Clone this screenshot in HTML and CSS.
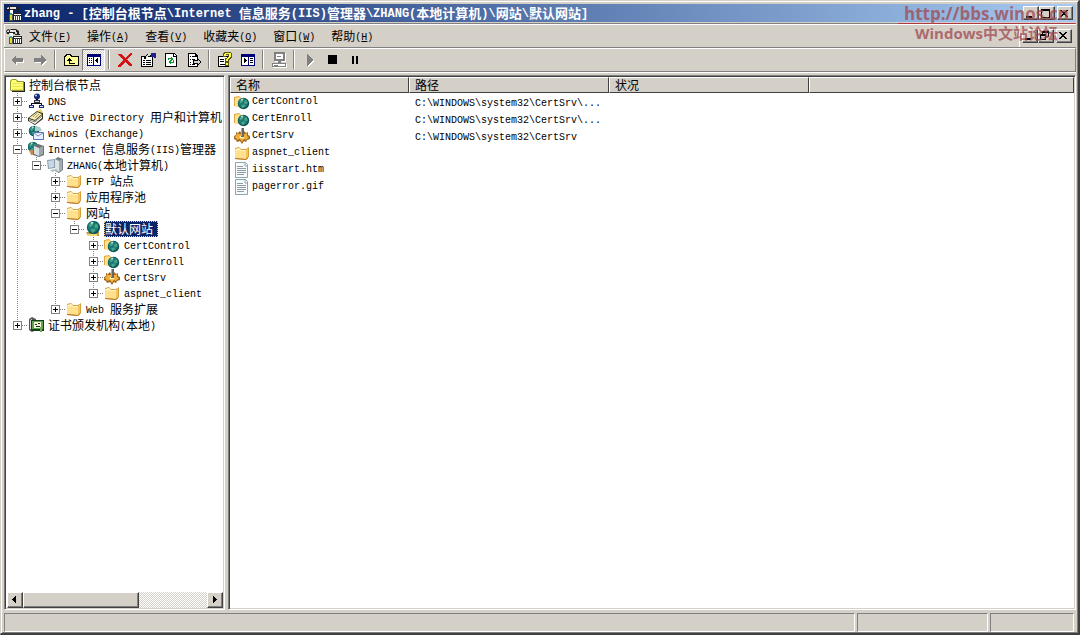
FILE: index.html
```html
<!DOCTYPE html>
<html lang="zh-CN">
<head>
<meta charset="utf-8">
<title>zhang - 控制台根节点</title>
<link rel="stylesheet" href="styles.css">
</head>
<body>
<svg class="defs" aria-hidden="true">
  <symbol id="mmc" viewBox="0 0 16 16">
    <path d="M0 3l2-2 2 1 1-1h5l3 2v3h-2V4H9v2H7V5H3v1H1z" fill="#222"/><path d="M1 3l2-1v2H1zM4 2h6v2H4z" fill="#e4e4e4"/>
    <path d="M4 5h3v4H4z" fill="#fff"/><path d="M3 9h4v7H3z" fill="#555"/><path d="M4 9h2v6H4z" fill="#e8e020"/><path d="M4 8h2v2H4z" fill="#30a8a0"/>
    <path d="M7 8h9v8H7z" fill="#222"/><path d="M8 9h7v1H8zM8 11h1v4H8zM10 11h1v4h-1zM12 11h1v4h-1zM14 11h1v4h-1z" fill="#fff"/><path d="M9 10h1v5H9zM11 10h1v5h-1zM13 10h1v5h-1z" fill="#902050"/><path d="M9 6h5v1H9z" fill="#222"/>
  </symbol>
  <symbol id="folder" viewBox="0 0 16 16">
    <path d="M1 3l4-1 2 2h5l3-2v10l-3 3-11-1z" fill="#d99f3c"/><path d="M1 4l4-1 2 2h5v9L1 13z" fill="#ffe08e"/><path d="M12 5l2-2v9l-2 2z" fill="#f3c35c"/><path d="M2 4l3-1 1 1 1 1h5v1H7L5 5 2 6z" fill="#fff4c4"/><path d="M1 13l11 1 2-2v1l-2 2-11-1z" fill="#b97a26"/>
  </symbol>
  <symbol id="rootfolder" viewBox="0 0 16 16">
    <path d="M0 4l2-2h4l2 2h6v10H1L0 13z" fill="#99992a"/><path d="M1 5l1-2h4l1 2h6v8H1z" fill="#ffff70"/><path d="M2 6h11v1H2zM2 9h11v1H2zM2 12h11v1H2z" fill="#e6e860"/><path d="M14 5h1v10H2v-1h12z" fill="#222"/>
  </symbol>
  <symbol id="globe" viewBox="0 0 16 16">
    <circle cx="8" cy="8" r="7" fill="#075055"/><circle cx="7.500" cy="7.500" r="6" fill="#157a74"/><path d="M3 5l3-3 2 1-1 3-3 2zM9 5l3-1 1 4-3 1-1-2zM5 10l4-1 1 2-3 3z" fill="#4fa089"/><path d="M5 2h3L6 5z" fill="#cceee0"/>
  </symbol>
  <symbol id="site" viewBox="0 0 16 16">
    <path d="M1 11h13v4H3z" fill="#c79b46"/><path d="M2 13h10v2H3z" fill="#f4d878"/><use href="#globe" x="1" y="-1" width="15" height="15"/>
  </symbol>
  <symbol id="webdir" viewBox="0 0 16 16">
    <path d="M0 3l5-1 2 2h5v10L0 12z" fill="#e2a943"/><path d="M1 4l4-1 2 2v8l-6-1z" fill="#ffe18c"/><use href="#globe" x="3" y="3" width="13" height="13"/>
  </symbol>
  <symbol id="gear" viewBox="0 0 16 16">
    <path d="M2 4l2 1 2-2 1 2h2l1-2 2 2 2-1v3l2 1v3l-3 1-1 2-2-1-2 3-2-3-3 1-1-2-2-1V8l2-1z" fill="#9c641c"/><path d="M3 5l2 1h6l2-1v3l2 1-3 3-2-1-2 3-2-3-3 1-1-2-2-1 2-1z" fill="#f0ae3a"/><ellipse cx="8" cy="9" rx="2.500" ry="1.500" fill="#fff1ae"/><path d="M7 0h3v9H7z" fill="#666"/><path d="M7 0h1v8H7z" fill="#aaa"/>
  </symbol>
  <symbol id="file" viewBox="0 0 16 16">
    <path d="M1.500 .500h10l2 2v13h-12z" fill="#f8fbfb" stroke="#8da3ad"/><path d="M11 1v3h3" fill="none" stroke="#8da3ad"/><path d="M3 4.500h6M3 6.500h9M3 8.500h9M3 10.500h9M3 12.500h7" stroke="#8c9ba5"/>
  </symbol>
  <symbol id="dns" viewBox="0 0 16 16">
    <circle cx="9" cy="3.500" r="3" fill="#172878"/><circle cx="8" cy="2.500" r="1" fill="#bfe0ff"/><path d="M8 6h2v4H8zM3 10h11v1H3zM3 10h1v3H3zM13 10h1v3h-1z" fill="#111"/><path d="M6 7h6v3H6z" fill="#333"/><path d="M7 8h4v1H7z" fill="#ccd8ff"/><path d="M1 12h5v3H1zM11 12h5v3h-5z" fill="#182a80"/><path d="M2 13h3v1H2zM12 13h3v1h-3z" fill="#dde8ff"/>
  </symbol>
  <symbol id="adir" viewBox="0 0 16 16">
    <path d="M0 9l9-7 6 2v6l-8 6-7-4z" fill="#332e18"/><path d="M1 9l8-6 5 2-7 6z" fill="#f4ecb4"/><path d="M7 12l7-6v3l-7 6-6-3v-2z" fill="#fff"/><path d="M1 11l6 2 7-6" fill="none" stroke="#89856a"/><path d="M5 8l4-4M7 9l4-4" stroke="#ac9d59"/><path d="M9 2l4-2 2 4z" fill="#e8d05a"/>
  </symbol>
  <symbol id="exch" viewBox="0 0 16 16">
    <use href="#globe" x="0" y="0" width="12" height="12"/><path d="M7 1l5 1 2 4H7z" fill="#a9ccc8"/><path d="M5.500 7.500h10v7h-10z" fill="#e9eeff" stroke="#5a6fae"/><path d="M6 8l4 3 5-3" fill="none" stroke="#7e90c4"/>
  </symbol>
  <symbol id="iis" viewBox="0 0 16 16">
    <use href="#globe" x="-1" y="0" width="12" height="12"/><path d="M1 9h5v5H3z" fill="#c58c4b"/><path d="M5 5l5-2 6 2v9l-5 2-6-2z" fill="#687175"/><path d="M6 5l5 2v8l-5-2z" fill="#d8dfe0"/><path d="M11 7l4-2v8l-4 2z" fill="#9ba7aa"/>
  </symbol>
  <symbol id="server" viewBox="0 0 16 16">
    <path d="M8 2l3-2 5 2v11l-4 3-4-2z" fill="#768087"/><path d="M8 2l4 2v11l-4-2z" fill="#dce4e6"/><path d="M12 4l3-2v11l-3 2z" fill="#a2acb1"/><path d="M0 3l8-1v9l-7 1z" fill="#8e9ca5"/><path d="M1 4l6-1v7l-5 1z" fill="#c6d8e7"/><path d="M3 13l6-1 2 1-6 2z" fill="#b1bdc2"/>
  </symbol>
  <symbol id="ca" viewBox="0 0 16 16">
    <path d="M1 2l3-2 4 2v11l-4 2-3-2z" fill="#555"/><path d="M2 3l2-1v11l-2-1z" fill="#ddd"/><path d="M3 3h13v11H3z" fill="#153f18"/><path d="M4 4h11v8H4z" fill="#63a054"/><path d="M6 5h7v6H6z" fill="#eef6d8"/><path d="M7 7h2v1H7zM10 6h2v1h-2zM8 9h4v1H8z" fill="#222"/><path d="M12 10h2v5h-2z" fill="#6cad47"/>
  </symbol>
</svg>

<main class="window">
  <header class="titlebar">
    <svg class="ico"><use href="#mmc"/></svg>
    <h1><span class="en">zhang - [</span>控制台根节点<span class="en">\Internet </span>信息服务<span class="en">(IIS)</span>管理器<span class="en">\ZHANG(</span>本地计算机<span class="en">)\</span>网站<span class="en">\</span>默认网站<span class="en">]</span></h1>
    <div class="winbtns">
      <button type="button" aria-label="最小化"><svg viewBox="0 0 12 11"><path d="M2 8h6v2H2z"/></svg></button>
      <button type="button" aria-label="最大化"><svg viewBox="0 0 12 11"><path d="M1 1h9v9H1zM2 3v6h7V3z" fill-rule="evenodd"/></svg></button>
      <button type="button" class="close" aria-label="关闭"><svg viewBox="0 0 12 11"><path d="M2 2h2v1h1v1h2V3h1V2h2v1H9v1H8v1H7v1h1v1h1v1h1v1H8V8H7V7H5v1H4v1H2V8h1V7h1V6h1V5H4V4H3V3H2z"/></svg></button>
    </div>
  </header>

  <nav class="menubar" aria-label="菜单">
    <svg class="ico"><use href="#mmc"/></svg>
    <div class="menus">
      <button type="button">文件<span class="en">(<u>F</u>)</span></button>
      <button type="button">操作<span class="en">(<u>A</u>)</span></button>
      <button type="button">查看<span class="en">(<u>V</u>)</span></button>
      <button type="button">收藏夹<span class="en">(<u>O</u>)</span></button>
      <button type="button">窗口<span class="en">(<u>W</u>)</span></button>
      <button type="button">帮助<span class="en">(<u>H</u>)</span></button>
    </div>
    <div class="winbtns child">
      <button type="button" aria-label="最小化子窗口"><svg viewBox="0 0 12 11"><path d="M2 8h6v2H2z"/></svg></button>
      <button type="button" aria-label="还原子窗口"><svg viewBox="0 0 12 11"><path d="M3 1h7v6H7V6h2V3H4v1H3zM1 4h6v6H1zM2 6v3h4V6z" fill-rule="evenodd"/></svg></button>
      <button type="button" class="close" aria-label="关闭子窗口"><svg viewBox="0 0 12 11"><path d="M2 2h2v1h1v1h2V3h1V2h2v1H9v1H8v1H7v1h1v1h1v1h1v1H8V8H7V7H5v1H4v1H2V8h1V7h1V6h1V5H4V4H3V3H2z"/></svg></button>
    </div>
  </nav>

  <div class="toolbar" role="toolbar" aria-label="工具栏">
    <button type="button" aria-label="后退"><svg viewBox="0 0 16 16"><path d="M3 9l5 5v-3h7V8H8z" fill="#fff"/><path d="M2 8l5-5v3h7v4H7v3z" fill="#808080"/></svg></button>
    <button type="button" aria-label="前进"><svg viewBox="0 0 16 16"><path d="M15 9l-5 5v-3H3V8h7z" fill="#fff"/><path d="M14 8L9 3v3H2v4h7v3z" fill="#808080"/></svg></button>
    <i class="sep"></i>
    <button type="button" aria-label="向上"><svg viewBox="0 0 16 16"><path d="M1 4h1V3h1V2h5v1h1v1h7v10H1z"/><path d="M2 5h1V4h1V3h3v1h1v1h7v8H2z" fill="#ffff91"/><path d="M6 6h1v1h1v1h1v1H7v2h5v1H6V9H4V8h1V7h1z"/></svg></button>
    <button type="button" class="pressed" aria-label="显示/隐藏控制台树" aria-pressed="true"><svg viewBox="0 0 16 16"><path d="M1 2h14v12H1z" fill="#000078"/><path d="M2 5h5v8H2zM8 5h6v8H8z" fill="#fff"/><path d="M3 6h1v1H3zM5 6h1v1H5zM3 8h1v1H3zM5 8h1v1H5zM3 10h1v1H3zM5 10h1v1H5zM11 6h1v5h-1zM10 7h1v3h-1zM9 8h1v1H9z"/></svg></button>
    <i class="sep"></i>
    <button type="button" aria-label="删除"><svg viewBox="0 0 16 16"><path d="M1 2h3l4 4 5-5h2v1l-5 6 5 5v1h-3L8 10l-4 5H1v-2l5-5-5-5z" fill="#d41414"/></svg></button>
    <button type="button" aria-label="属性"><svg viewBox="0 0 16 16"><path d="M1 4h12v11H1z"/><path d="M2 5h10v9H2z" fill="#fff"/><path d="M3 8h2v1H3zM6 8h5v1H6zM3 10h2v1H3zM6 10h5v1H6zM3 12h2v1H3zM6 12h5v1H6zM3 6l5-4 3 1 1 2-4-1-3 3z"/><path d="M6 4l3-2 2 1-3 1-2 2z" fill="#ddd"/><path d="M11 1h5v5h-2V5h-3z" fill="#202090"/></svg></button>
    <button type="button" aria-label="刷新"><svg viewBox="0 0 16 16"><path d="M2 1h9l3 3v11H2z"/><path d="M3 2h7v3h3v9H3z" fill="#fff"/><path d="M11 2v2h2z" fill="#fff"/><path d="M5 8V6h3V5l2 2-2 2V7H6v1zM11 8v3H8v1l-3-2 3-2v2h2V8z" fill="#129430"/></svg></button>
    <button type="button" aria-label="导出列表"><svg viewBox="0 0 16 16"><path d="M2 1h8l2 3v11H2z"/><path d="M3 2h6v3h2v9H3z" fill="#fff"/><path d="M4 4h1v1H4zM6 4h3v1H6zM4 7h1v1H4zM6 7h3v1H6zM4 10h1v1H4zM4 12h1v1H4zM6 12h3v1H6zM7 8h4V6l5 4-5 4v-2H7z"/><path d="M8 9h4V8l2 2-2 2v-1H8z" fill="#d0d0d0"/></svg></button>
    <i class="sep"></i>
    <button type="button" aria-label="帮助"><svg viewBox="0 0 16 16"><path d="M1 4h11v11H1z"/><path d="M2 5h9v9H2z" fill="#fff"/><path d="M3 7h4v1H3zM3 9h4v1H3zM3 12h5v1H3z"/><path d="M6 4V1l2-1h5l2 1v5l-3 2v2H8V6l3-1V3H9v2H6zM8 10h4v4H8z" fill="#5b5718"/><path d="M7 4V2l2-1h4l1 1v3l-3 2v2H9V7l3-2V2H9v2zM9 11h2v2H9z" fill="#ffff42"/></svg></button>
    <button type="button" aria-label="操作窗格"><svg viewBox="0 0 16 16"><path d="M1 2h14v12H1z" fill="#000078"/><path d="M2 5h6v8H2zM9 5h5v8H9z" fill="#fff"/><path d="M10 6h3v1h-3zM10 8h3v1h-3zM10 10h3v1h-3zM4 6h1v5H4zM5 7h1v3H5zM6 8h1v1H6z"/></svg></button>
    <i class="sep"></i>
    <button type="button" aria-label="连接" disabled><svg viewBox="0 0 16 16"><path d="M4 1h11v9H4zM2 12h14v4H2z" fill="#fff"/><path d="M3 0h11v9H3zM5 2v5h7V2zM7 9h3v2H7zM1 11h14v4H1zM2 12v2h12v-2z" fill="#808080" fill-rule="evenodd"/><path d="M6 4h4v1H6zM3 13h4v1H3z" fill="#808080"/></svg></button>
    <i class="sep"></i>
    <button type="button" aria-label="启动" disabled><svg viewBox="0 0 16 16"><path d="M6 3l6 6-6 6z" fill="#fff"/><path d="M5 2l6 6-6 6z" fill="#808080"/></svg></button>
    <button type="button" aria-label="停止"><svg viewBox="0 0 16 16"><path d="M3 3h9v9H3z"/></svg></button>
    <button type="button" aria-label="暂停"><svg viewBox="0 0 16 16"><path d="M4 4h2v8H4zM8 4h2v8H8z"/></svg></button>
  </div>

  <div class="panes">
    <section class="treepane" aria-label="控制台树">
      <div class="tree">
        <div class="root"><svg class="ico"><use href="#rootfolder"/></svg><span class="label">控制台根节点</span></div>
        <ul>
          <li><div class="node"><button type="button" class="exp" aria-label="展开"></button><svg class="ico"><use href="#dns"/></svg><span class="label"><span class="en">DNS</span></span></div></li>
          <li><div class="node"><button type="button" class="exp" aria-label="展开"></button><svg class="ico"><use href="#adir"/></svg><span class="label"><span class="en">Active Directory </span>用户和计算机</span></div></li>
          <li><div class="node"><button type="button" class="exp" aria-label="展开"></button><svg class="ico"><use href="#exch"/></svg><span class="label"><span class="en">winos (Exchange)</span></span></div></li>
          <li><div class="node"><button type="button" class="exp open" aria-label="折叠"></button><svg class="ico"><use href="#iis"/></svg><span class="label"><span class="en">Internet </span>信息服务<span class="en">(IIS)</span>管理器</span></div>
            <ul>
              <li><div class="node"><button type="button" class="exp open" aria-label="折叠"></button><svg class="ico"><use href="#server"/></svg><span class="label"><span class="en">ZHANG(</span>本地计算机<span class="en">)</span></span></div>
                <ul>
                  <li><div class="node"><button type="button" class="exp" aria-label="展开"></button><svg class="ico"><use href="#folder"/></svg><span class="label"><span class="en">FTP </span>站点</span></div></li>
                  <li><div class="node"><button type="button" class="exp" aria-label="展开"></button><svg class="ico"><use href="#folder"/></svg><span class="label">应用程序池</span></div></li>
                  <li><div class="node"><button type="button" class="exp open" aria-label="折叠"></button><svg class="ico"><use href="#folder"/></svg><span class="label">网站</span></div>
                    <ul>
                      <li><div class="node"><button type="button" class="exp open" aria-label="折叠"></button><svg class="ico"><use href="#site"/></svg><span class="label selected">默认网站</span></div>
                        <ul>
                          <li><div class="node"><button type="button" class="exp" aria-label="展开"></button><svg class="ico"><use href="#webdir"/></svg><span class="label"><span class="en">CertControl</span></span></div></li>
                          <li><div class="node"><button type="button" class="exp" aria-label="展开"></button><svg class="ico"><use href="#webdir"/></svg><span class="label"><span class="en">CertEnroll</span></span></div></li>
                          <li><div class="node"><button type="button" class="exp" aria-label="展开"></button><svg class="ico"><use href="#gear"/></svg><span class="label"><span class="en">CertSrv</span></span></div></li>
                          <li><div class="node"><button type="button" class="exp" aria-label="展开"></button><svg class="ico"><use href="#folder"/></svg><span class="label"><span class="en">aspnet_client</span></span></div></li>
                        </ul>
                      </li>
                    </ul>
                  </li>
                  <li><div class="node"><button type="button" class="exp" aria-label="展开"></button><svg class="ico"><use href="#folder"/></svg><span class="label"><span class="en">Web </span>服务扩展</span></div></li>
                </ul>
              </li>
            </ul>
          </li>
          <li><div class="node"><button type="button" class="exp" aria-label="展开"></button><svg class="ico"><use href="#ca"/></svg><span class="label">证书颁发机构<span class="en">(</span>本地<span class="en">)</span></span></div></li>
        </ul>
      </div>
      <div class="scrollbar">
        <button type="button" aria-label="向左滚动"><svg viewBox="0 0 12 12"><path d="M7 2v7H6V8H5V7H4V6H3V5h1V4h1V3h1V2z"/></svg></button>
        <div class="track"><div class="thumb"></div></div>
        <button type="button" aria-label="向右滚动"><svg viewBox="0 0 12 12"><path d="M4 2v7h1V8h1V7h1V6h1V5H7V4H6V3H5V2z"/></svg></button>
      </div>
    </section>

    <section class="listpane" aria-label="内容">
      <table>
        <colgroup><col class="c-name"><col class="c-path"><col class="c-path"><col></colgroup>
        <thead><tr><th>名称</th><th>路径</th><th>状况</th><td class="filler"></td></tr></thead>
        <tbody>
          <tr><td><div class="item"><svg class="ico"><use href="#webdir"/></svg><span class="en">CertControl</span></div></td><td><span class="en">C:\WINDOWS\system32\CertSrv\...</span></td><td></td><td></td></tr>
          <tr><td><div class="item"><svg class="ico"><use href="#webdir"/></svg><span class="en">CertEnroll</span></div></td><td><span class="en">C:\WINDOWS\system32\CertSrv\...</span></td><td></td><td></td></tr>
          <tr><td><div class="item"><svg class="ico"><use href="#gear"/></svg><span class="en">CertSrv</span></div></td><td><span class="en">C:\WINDOWS\system32\CertSrv</span></td><td></td><td></td></tr>
          <tr><td><div class="item"><svg class="ico"><use href="#folder"/></svg><span class="en">aspnet_client</span></div></td><td></td><td></td><td></td></tr>
          <tr><td><div class="item"><svg class="ico"><use href="#file"/></svg><span class="en">iisstart.htm</span></div></td><td></td><td></td><td></td></tr>
          <tr><td><div class="item"><svg class="ico"><use href="#file"/></svg><span class="en">pagerror.gif</span></div></td><td></td><td></td><td></td></tr>
        </tbody>
      </table>
    </section>
  </div>

  <footer class="statusbar"><div class="s1"></div><div class="s2"></div><div class="s3"></div></footer>

  <div class="watermark"><p class="url">http://bbs.winos.cn</p><p>Windows中文站论坛</p></div>
</main>
</body>
</html>
```
FILE: styles.css
```css
* { box-sizing: border-box; }
html, body { height: 100%; }
body {
  margin: 0;
  background: #d4d0c8;
  color: #000;
  font: 12px/16px "Noto Sans CJK SC", sans-serif;
}
.defs { position: absolute; width: 0; height: 0; }
button {
  margin: 0;
  padding: 0;
  border: 0;
  background: #d4d0c8;
  color: inherit;
  font: inherit;
}
svg { display: block; }
.ico { width: 16px; height: 16px; flex: none; }
.en {
  font-family: "Liberation Mono", monospace;
  font-size: 10px;
  line-height: 10px;
  vertical-align: 1px;
  white-space: pre;
}

.window {
  position: relative;
  display: flex;
  flex-direction: column;
  min-height: 100%;
  padding: 3px 2px 1px 3px;
  border: 1px solid #d4d0c8;
  border-right: 2px solid #404040;
  border-bottom: 2px solid #404040;
  box-shadow: inset 1px 1px #fff, inset -1px -1px #808080;
}

.titlebar {
  display: flex;
  align-items: center;
  height: 18px;
  padding: 0 3px 0 2px;
  background: linear-gradient(90deg, #0a246a, #a6caf0);
  color: #fff;
}
.titlebar h1 {
  flex: 1;
  margin: 0 0 0 2px;
  font-size: 13px;
  line-height: 16px;
  font-weight: bold;
  white-space: nowrap;
}
.titlebar .en { font-size: 12px; }

.winbtns { display: flex; }
.winbtns button, .scrollbar button {
  width: 16px;
  height: 14px;
  border: 1px solid;
  border-color: #fff #404040 #404040 #fff;
  box-shadow: inset -1px -1px #808080;
}
.winbtns svg { width: 12px; height: 11px; shape-rendering: crispEdges; }
.winbtns .close { margin-left: 2px; }

.menubar {
  display: flex;
  align-items: center;
  height: 25px;
  margin-top: 1px;
  padding: 0 4px 0 2px;
  border-top: 1px solid #808080;
  border-bottom: 1px solid #808080;
  box-shadow: inset 1px 1px #fff;
}
.menus { display: flex; flex: 1; }
.menus button { padding: 0 8px; line-height: 18px; }
.menus button:first-child { padding-left: 7px; }
.child { height: 22px; align-items: center; padding-left: 2px; border-left: 1px solid #fff; }

.toolbar {
  display: flex;
  height: 24px;
  border: 1px solid;
  border-color: #fff #808080 #808080 #fff;
}
.toolbar button {
  display: flex;
  align-items: center;
  justify-content: center;
  width: 23px;
  height: 22px;
}
.toolbar svg { width: 16px; height: 16px; shape-rendering: crispEdges; }
.toolbar .pressed {
  border: 1px solid;
  border-color: #808080 #fff #fff #808080;
  background: repeating-conic-gradient(#fff 0 25%, #d4d0c8 0 50%) 0 0 / 2px 2px;
}
.sep {
  width: 2px;
  height: 19px;
  margin: 1px 3px;
  border-left: 1px solid #808080;
  border-right: 1px solid #fff;
}

.panes {
  display: flex;
  flex: 1;
  gap: 3px;
  padding-top: 2px;
  border-top: 1px solid #fff;
}
.treepane, .listpane {
  border: 1px solid;
  border-color: #808080 #fff #fff #808080;
  box-shadow: inset 1px 1px #404040, inset -1px -1px #d4d0c8;
  padding: 1px;
  background: #fff;
  background-clip: padding-box;
}
.treepane {
  display: flex;
  flex-direction: column;
  flex: none;
  width: 221px;
  padding-left: 2px;
}
.tree { flex: 1; padding-left: 2px; white-space: nowrap; overflow: hidden; }
.tree ul { margin: 0; padding: 0; list-style: none; }
.tree ul ul { margin-left: 19px; }
.tree li {
  background: repeating-linear-gradient(#808080 0 1px, transparent 1px 2px) 8px 0 / 1px 100% no-repeat;
}
.tree li:last-child { background-size: 1px 8px; }
.root, .node { display: flex; align-items: center; height: 16px; }
.root { padding-left: 1px; }
.node {
  padding-left: 4px;
  background: repeating-linear-gradient(90deg, #808080 0 1px, transparent 1px 2px) 9px 8px / 10px 1px no-repeat;
}
.exp {
  width: 9px;
  height: 9px;
  margin-right: 6px;
  flex: none;
  border: 1px solid #808080;
  background:
    linear-gradient(#000, #000) center / 5px 1px no-repeat,
    linear-gradient(#000, #000) center / 1px 5px no-repeat,
    #fff;
}
.exp.open { background: linear-gradient(#000, #000) center / 5px 1px no-repeat, #fff; }
.label { margin-left: 3px; padding: 0 5px 0 1px; line-height: 16px; }
.root .label { margin-left: 2px; }
.selected { background: #0a246a; color: #fff; outline: 1px dotted #f0d080; outline-offset: -1px; }

.scrollbar { display: flex; height: 16px; }
.scrollbar button { height: 16px; flex: none; }
.scrollbar svg { width: 12px; height: 12px; margin: 0 auto; shape-rendering: crispEdges; }
.track {
  flex: 1;
  background: repeating-conic-gradient(#fff 0 25%, #d4d0c8 0 50%) 0 0 / 2px 2px;
}
.thumb {
  width: 63%;
  height: 16px;
  border: 1px solid;
  border-color: #fff #404040 #404040 #fff;
  box-shadow: inset -1px -1px #808080;
  background: #d4d0c8;
}

.listpane { flex: 1; min-width: 0; }
table { width: 100%; table-layout: fixed; border-collapse: separate; border-spacing: 0; }
.c-name { width: 179px; }
.c-path { width: 200px; }
th, .filler {
  height: 16px;
  padding: 0 5px;
  border: 1px solid;
  border-color: #fff #404040 #404040 #fff;
  background: #d4d0c8;
  font-weight: normal;
  text-align: left;
  line-height: 14px;
}
tbody td { height: 17px; padding: 0 6px; line-height: 17px; white-space: nowrap; overflow: hidden; }
tbody td:first-child { padding: 0 4px; }
.item { display: flex; align-items: center; gap: 2px; height: 17px; }

.statusbar { display: flex; gap: 2px; height: 19px; margin: 3px 2px 0 0; }
.statusbar div { border: 1px solid; border-color: #808080 #fff #fff #808080; }
.s1 { flex: 1; }
.s2 { width: 131px; }
.s3 { width: 84px; }

.watermark {
  position: absolute;
  top: 4px;
  right: 3px;
  width: 177px;
  color: #a04850;
  opacity: 0.75;
  font: bold 15px/18px "Open Sans", "Noto Sans CJK SC", sans-serif;
  text-align: center;
  white-space: nowrap;
  pointer-events: none;
}
.watermark p { margin: 0; }
.watermark .url { border-bottom: 1px solid #c02030; font-size: 17px; }
```
